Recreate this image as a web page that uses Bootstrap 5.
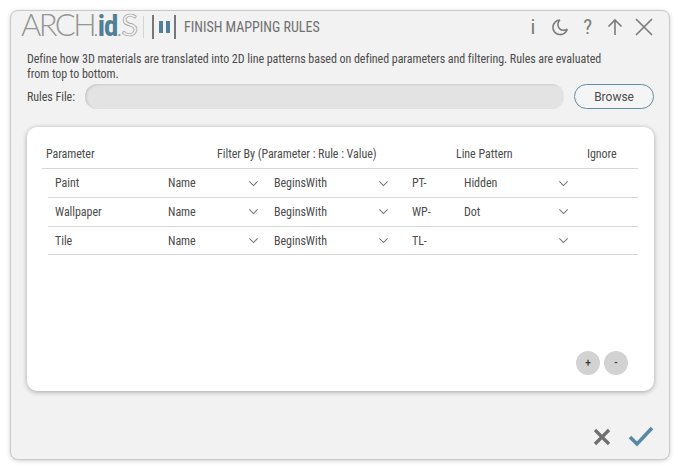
<!DOCTYPE html>
<html lang="en">
<head>
  <meta charset="UTF-8">
  <title>Finish Mapping Rules</title>
  <link href="https://cdn.jsdelivr.net/npm/bootstrap@5.3.0/dist/css/bootstrap.min.css" rel="stylesheet">
  <style>
    html, body { height: 100%; overflow: hidden; background: #fff; }
    body { font-family: Roboto, "Liberation Sans", sans-serif; font-size: 12px; color: #4c4c4c; font-stretch: 87%; letter-spacing: -.05px; }
    .app-window {
      width: 660px; height: 450px; margin: 10px;
      background: #f2f2f2; border: 1px solid #c9c9c9; border-radius: 8px;
      box-shadow: 0 1px 4px rgba(0,0,0,.18);
      padding: 0 15px 0 15px;
    }
    .title-row { height: 32px; }
    .logo { font-family: Lato, sans-serif; font-size: 31px; font-weight: 300; color: #959595; letter-spacing: -2.6px; line-height: 32px; white-space: nowrap; width: 122px; margin-left: -5px; flex: none; }
    .logo b { font-family: Roboto, sans-serif; font-weight: 700; color: #4f8097; letter-spacing: -1px; font-size: 29px; font-stretch: 87%; }
    .logo i { font-style: normal; font-weight: 400; color: transparent; -webkit-text-stroke: .7px #999; letter-spacing: 0; }
    .logo-dot { font-size: 16px; letter-spacing: 0; font-weight: 400; }
    .sep { width: 1px; height: 22px; background: #d5d5d5; margin: 0 8px 0 0; flex: none; }
    .logo-mark { width: 25px; height: 26px; margin-right: 7px; flex: none; }
    .app-title { font-size: 14px; color: #707070; letter-spacing: 0; }
    .tool { color: #7c7c7c; }
    .tool-i, .tool-q { font-size: 21px; line-height: 1; font-weight: 400; }
    .tool-moon { margin-left: 15px; }
    .tool-q { margin-left: 13px; }
    .tool-up { margin-left: 15px; }
    .tool-close { margin-left: 11px; }
    .intro { margin: 9px 0 0 1px; width: 590px; line-height: 15px; }
    .file-row { margin: 2px 0 0 1px; height: 26px; }
    .file-row label { white-space: nowrap; }
    .file-input {
      width: 480px; height: 25px; margin-left: 10px;
      background: #e3e3e3; border: 0; border-radius: 12px;
      box-shadow: inset 2px 1px 2px rgba(0,0,0,.1);
    }
    .btn-browse {
      width: 80px; height: 25px; padding: 0; margin-left: 10px;
      font-size: 12px; color: #4c4c4c; background: #f5f5f5;
      border: 1.5px solid #5f8ea3; border-radius: 13px; letter-spacing: 0;
    }
    .rules-card {
      width: 627px; height: 265px; margin: 17px 0 0 1px;
      border: 0; border-radius: 10px; background: #fff;
      box-shadow: 0 1px 5px rgba(0,0,0,.32);
      padding: 0 16px 0 15px;
    }
    .rules-head { height: 42px; border-bottom: 1px solid #d6d6d6; padding-left: 4px; padding-top: 13px; flex: none; }
    .col-param { width: 171px; } .col-filter { width: 239px; } .col-pattern { width: 131px; }
    .rules-table { width: 590px; margin: 0 0 0 6px; table-layout: fixed; }
    .rules-table td { height: 28.7px; padding: 0; vertical-align: middle; border-bottom: 1px solid #d6d6d6; background: transparent; color: #4c4c4c; font-size: 12px; }
    .rules-table .c-name { padding-left: 7px; }
    .rules-table .c-val { padding-left: 16px; }
    .rules-table .form-select {
      height: 26px; padding: 0 0 0 8px; border: 0; background-color: transparent;
      font-size: 12px; color: #4c4c4c; letter-spacing: -.05px; font-stretch: 87%;
      background-size: 11px 11px; background-position: right 7px center;
      background-image: url("data:image/svg+xml,%3csvg xmlns='http://www.w3.org/2000/svg' viewBox='0 0 16 16'%3e%3cpath fill='none' stroke='%23777' stroke-width='1.6' d='M2 5l6 6 6-6'/%3e%3c/svg%3e");
    }
    .round-btn {
      width: 24px; height: 24px; padding: 0; border: 0; border-radius: 50%;
      background: #d2d2d2; color: #333; font-size: 10px; line-height: 22px; font-weight: 500;
    }
    .card-actions { margin-top: auto; margin-bottom: 16px; padding-right: 10px; }
    .footer-row { height: 68px; padding: 0 0 12px 0; flex: none; }
  </style>
</head>
<body>
  <div class="app-window d-flex flex-column">
    <div class="title-row d-flex align-items-center">
      <div class="logo">ARCH<span class="logo-dot">.</span><b>id</b><span class="logo-dot">.</span><i>S</i></div>
      <div class="sep"></div>
      <svg class="logo-mark" viewBox="0 0 25 26">
        <rect x="0" y="1" width="2" height="24" fill="#777"/>
        <rect x="7" y="7" width="4" height="12" fill="#4f8097"/>
        <rect x="14" y="7" width="4" height="12" fill="#4f8097"/>
        <rect x="22" y="1" width="2" height="24" fill="#777"/>
      </svg>
      <div class="app-title">FINISH MAPPING RULES</div>
      <div class="ms-auto d-flex align-items-center">
        <span class="tool tool-i">i</span>
        <svg class="tool-moon" width="20" height="20" viewBox="0 0 20 20" fill="none" stroke="#7c7c7c" stroke-width="1.6"><path d="M10 3a7.300 7.300 0 1 0 7.300 9M10 3a5.500 5.500 0 0 0 7.300 9"/></svg>
        <span class="tool tool-q">?</span>
        <svg class="tool-up" width="16" height="18" viewBox="0 0 16 18" fill="none" stroke="#7c7c7c" stroke-width="1.6"><path d="M8 17V2M1.500 8.500L8 2l6.500 6.500"/></svg>
        <svg class="tool-close" width="20" height="20" viewBox="0 0 20 20" fill="none" stroke="#7c7c7c" stroke-width="1.7"><path d="M2 2l16 16M18 2L2 18"/></svg>
      </div>
    </div>

    <p class="intro mb-0">Define how 3D materials are translated into 2D line patterns based on defined parameters and filtering. Rules are evaluated from top to bottom.</p>

    <div class="file-row d-flex align-items-center">
      <label>Rules File:</label>
      <input class="file-input" type="text">
      <button class="btn btn-browse" type="button">Browse</button>
    </div>

    <div class="card rules-card">
      <div class="rules-head d-flex align-items-center">
        <span class="col-param">Parameter</span>
        <span class="col-filter">Filter By (Parameter : Rule : Value)</span>
        <span class="col-pattern">Line Pattern</span>
        <span>Ignore</span>
      </div>
      <table class="table rules-table mb-0">
        <colgroup>
          <col style="width:112px"><col style="width:106px"><col style="width:130px"><col style="width:60px"><col style="width:120px"><col>
        </colgroup>
        <tbody>
          <tr>
            <td class="c-name">Paint</td>
            <td><select class="form-select"><option>Name</option></select></td>
            <td><select class="form-select"><option>BeginsWith</option></select></td>
            <td class="c-val">PT-</td>
            <td><select class="form-select"><option>Hidden</option></select></td>
            <td></td>
          </tr>
          <tr>
            <td class="c-name">Wallpaper</td>
            <td><select class="form-select"><option>Name</option></select></td>
            <td><select class="form-select"><option>BeginsWith</option></select></td>
            <td class="c-val">WP-</td>
            <td><select class="form-select"><option>Dot</option></select></td>
            <td></td>
          </tr>
          <tr>
            <td class="c-name">Tile</td>
            <td><select class="form-select"><option>Name</option></select></td>
            <td><select class="form-select"><option>BeginsWith</option></select></td>
            <td class="c-val">TL-</td>
            <td><select class="form-select"><option></option></select></td>
            <td></td>
          </tr>
        </tbody>
      </table>
      <div class="card-actions d-flex justify-content-end gap-1">
        <button class="round-btn" type="button">+</button>
        <button class="round-btn" type="button">-</button>
      </div>
    </div>

    <div class="footer-row d-flex align-items-end justify-content-end">
      <svg width="20" height="20" viewBox="0 0 20 20" fill="none" stroke="#6f6f6f" stroke-width="3.200"><path d="M3 3l14 14M17 3L3 17"/></svg>
      <svg class="ms-3" width="26" height="22" viewBox="0 0 26 22" fill="none" stroke="#568aa3" stroke-width="3.600"><path d="M2 12l7 7L24 3"/></svg>
    </div>
  </div>
</body>
</html>
